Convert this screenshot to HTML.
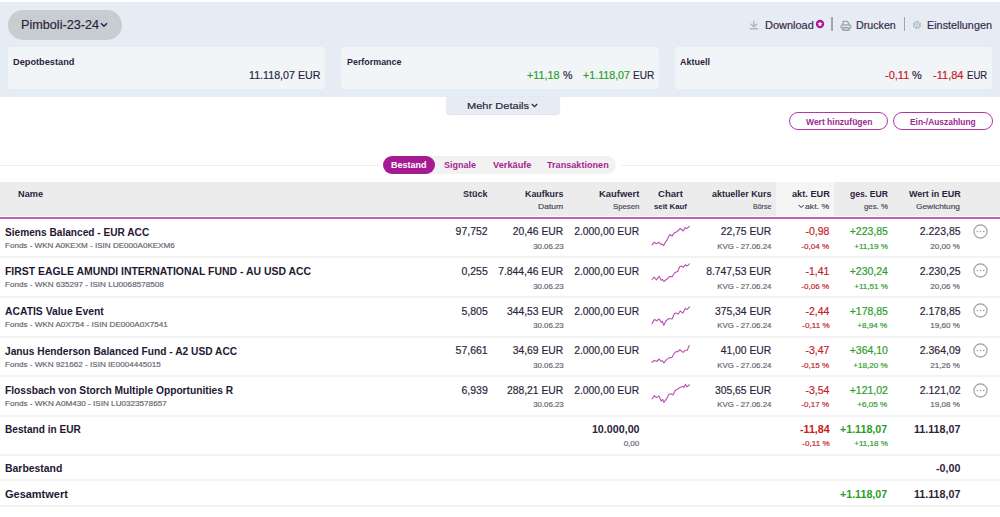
<!DOCTYPE html>
<html lang="de"><head><meta charset="utf-8"><title>Depot</title>
<style>
html,body{margin:0;padding:0;background:#fff;}
body{width:1000px;height:517px;overflow:hidden;position:relative;font-family:"Liberation Sans",sans-serif;color:#2d1f3d;}
.a{position:absolute;white-space:nowrap;line-height:1;}
</style></head><body>
<div class="a" style="left:0px;top:2px;width:1000px;height:95px;background:#e5ecf3;"></div>
<div class="a" style="left:8px;top:9.5px;width:114px;height:30.5px;background:#c8cdd2;border-radius:16px;"></div>
<div class="a" style="left:20.75px;top:19px;font-size:12px;transform:scaleX(1.0535);transform-origin:0 50%;-webkit-text-stroke:0.18px;color:#2d1f3d;">Pimboli-23-24</div>
<svg class="a" style="left:100px;top:22px" width="8" height="6" viewBox="0 0 8 6"><path d="M1 1.2 L4 4.2 L7 1.2" fill="none" stroke="#2d1f3d" stroke-width="1.4"/></svg>
<svg class="a" style="left:748px;top:19px" width="12" height="12" viewBox="0 0 12 12"><path d="M5.9 2.2V7.4M2.9 5.1L5.9 7.8L8.9 5.1" fill="none" stroke="#b1b4ba" stroke-width="1.35" stroke-linecap="round" stroke-linejoin="round"/><path d="M1.7 9.75H10" stroke="#b1b4ba" stroke-width="1.5"/></svg>
<div class="a" style="left:764.70px;top:21px;font-size:10.2px;transform:scaleX(1.0780);transform-origin:0 50%;-webkit-text-stroke:0.18px;color:#3a2b4b;">Download</div>
<svg class="a" style="left:815.3px;top:18.8px" width="10" height="10" viewBox="0 0 10 10"><circle cx="5" cy="5" r="4.15" fill="#b0148f"/><path d="M5 2.5L5.75 4.1L7.45 4.3L6.2 5.5L6.5 7.2L5 6.4L3.5 7.2L3.8 5.5L2.55 4.3L4.25 4.1Z" fill="#fff"/></svg>
<div class="a" style="left:831.3px;top:17px;width:1.5px;height:14px;background:#a2a6ab;"></div>
<svg class="a" style="left:839.5px;top:19.6px" width="12" height="11.4" viewBox="0 0 12 11.4"><path d="M3 5V1.3H6.9L8.9 3.3V5" fill="none" stroke="#9fa3a9" stroke-width="1.25" stroke-linejoin="round"/><rect x="1.1" y="5" width="9.8" height="3.7" rx="1.7" fill="#dfe3e8" stroke="#9fa3a9" stroke-width="1.25"/><rect x="2.9" y="7.5" width="6.2" height="2.9" rx="0.4" fill="#c9cdd2" stroke="#9fa3a9" stroke-width="1.2"/></svg>
<div class="a" style="left:856.20px;top:21px;font-size:10.2px;transform:scaleX(1.0479);transform-origin:0 50%;-webkit-text-stroke:0.18px;color:#3a2b4b;">Drucken</div>
<div class="a" style="left:903.8px;top:17px;width:1.5px;height:14px;background:#a2a6ab;"></div>
<svg class="a" style="left:911.7px;top:20.1px" width="10" height="10" viewBox="0 0 10 10"><circle cx="5" cy="5" r="3.5" fill="none" stroke="#b6b9be" stroke-width="1.5" stroke-dasharray="1.55 1.2"/><circle cx="5" cy="5" r="2.7" fill="none" stroke="#b6b9be" stroke-width="1"/><circle cx="5" cy="5" r="1.1" fill="none" stroke="#b6b9be" stroke-width="0.8"/></svg>
<div class="a" style="left:926.70px;top:21px;font-size:10.2px;transform:scaleX(1.0613);transform-origin:0 50%;-webkit-text-stroke:0.18px;color:#3a2b4b;">Einstellungen</div>
<div class="a" style="left:8px;top:47.3px;width:317px;height:42px;background:#f1f5f8;border-radius:3px;"></div>
<div class="a" style="left:341px;top:47.3px;width:318.25px;height:42px;background:#f1f5f8;border-radius:3px;"></div>
<div class="a" style="left:674.5px;top:47.3px;width:317.5px;height:42px;background:#f1f5f8;border-radius:3px;"></div>
<div class="a" style="left:13.00px;top:58px;font-size:8.7px;transform:scaleX(1.0602);transform-origin:0 50%;font-weight:bold;color:#2d1f3d;">Depotbestand</div>
<div class="a" style="left:346.75px;top:58px;font-size:8.7px;transform:scaleX(1.0246);transform-origin:0 50%;font-weight:bold;color:#2d1f3d;">Performance</div>
<div class="a" style="left:679.50px;top:58px;font-size:8.7px;transform:scaleX(1.0343);transform-origin:0 50%;font-weight:bold;color:#2d1f3d;">Aktuell</div>
<div class="a" style="left:249.25px;top:70px;font-size:11px;transform:scaleX(0.9717);transform-origin:0 50%;-webkit-text-stroke:0.18px;color:#2d1f3d;">11.118,07 EUR</div>
<div class="a" style="left:527.00px;top:70px;font-size:11px;transform:scaleX(0.9808);transform-origin:0 50%;-webkit-text-stroke:0.18px;color:#2a9d2a;">+11,18</div>
<div class="a" style="left:562.50px;top:70px;font-size:11px;transform:scaleX(0.9713);transform-origin:0 50%;-webkit-text-stroke:0.18px;color:#2d1f3d;">%</div>
<div class="a" style="left:582.50px;top:70px;font-size:11px;transform:scaleX(0.9705);transform-origin:0 50%;-webkit-text-stroke:0.18px;color:#2a9d2a;">+1.118,07</div>
<div class="a" style="left:633.00px;top:70px;font-size:11px;transform:scaleX(0.9149);transform-origin:0 50%;-webkit-text-stroke:0.18px;color:#2d1f3d;">EUR</div>
<div class="a" style="left:885.00px;top:70px;font-size:11px;transform:scaleX(0.9997);transform-origin:0 50%;-webkit-text-stroke:0.18px;color:#c4221f;">-0,11</div>
<div class="a" style="left:912.00px;top:70px;font-size:11px;transform:scaleX(0.9969);transform-origin:0 50%;-webkit-text-stroke:0.18px;color:#2d1f3d;">%</div>
<div class="a" style="left:932.50px;top:70px;font-size:11px;transform:scaleX(1.0041);transform-origin:0 50%;-webkit-text-stroke:0.18px;color:#c4221f;">-11,84</div>
<div class="a" style="left:966.50px;top:70px;font-size:11px;transform:scaleX(0.8719);transform-origin:0 50%;-webkit-text-stroke:0.18px;color:#2d1f3d;">EUR</div>
<div class="a" style="left:445.6px;top:97px;width:114px;height:17.2px;background:#e5ecf3;border-radius:0 0 4px 4px;box-shadow:0 0.5px 1px rgba(60,80,110,0.18);"></div>
<div class="a" style="left:466.50px;top:101px;font-size:9.9px;transform:scaleX(1.1202);transform-origin:0 50%;-webkit-text-stroke:0.18px;color:#2d1f3d;">Mehr Details</div>
<svg class="a" style="left:531px;top:103px" width="7" height="5" viewBox="0 0 7 5"><path d="M0.8 1L3.5 3.6L6.2 1" fill="none" stroke="#2d1f3d" stroke-width="1.2"/></svg>
<div class="a" style="left:788.75px;top:112px;width:97.3px;height:15.8px;border:1.2px solid #b136a9;border-radius:10px;"></div>
<div class="a" style="left:893.25px;top:112px;width:97.3px;height:15.8px;border:1.2px solid #b136a9;border-radius:10px;"></div>
<div class="a" style="left:805.50px;top:118px;font-size:8.3px;transform:scaleX(1.0253);transform-origin:0 50%;font-weight:bold;color:#9c2896;">Wert hinzufügen</div>
<div class="a" style="left:910.00px;top:118px;font-size:8.3px;transform:scaleX(1.0113);transform-origin:0 50%;font-weight:bold;color:#9c2896;">Ein-/Auszahlung</div>
<div class="a" style="left:0px;top:164.5px;width:1000px;height:1px;background:#efefef;"></div>
<div class="a" style="left:378.5px;top:160px;width:242.5px;height:10px;background:#fff;"></div>
<div class="a" style="left:383.5px;top:156.2px;width:232.7px;height:17.4px;background:#f2f2f2;border-radius:9px;"></div>
<div class="a" style="left:383.2px;top:155.8px;width:51.8px;height:18.2px;background:#a61a91;border-radius:9.1px;"></div>
<div class="a" style="left:391.00px;top:161px;font-size:8.5px;transform:scaleX(1.0585);transform-origin:0 50%;font-weight:bold;color:#fff;">Bestand</div>
<div class="a" style="left:444.00px;top:161px;font-size:8.5px;transform:scaleX(1.0585);transform-origin:0 50%;font-weight:bold;color:#a91f94;">Signale</div>
<div class="a" style="left:493.00px;top:161px;font-size:8.5px;transform:scaleX(1.0863);transform-origin:0 50%;font-weight:bold;color:#a91f94;">Verkäufe</div>
<div class="a" style="left:547.00px;top:161px;font-size:8.5px;transform:scaleX(1.0706);transform-origin:0 50%;font-weight:bold;color:#a91f94;">Transaktionen</div>
<div class="a" style="left:0px;top:182.4px;width:1000px;height:33.4px;background:#ececec;"></div>
<div class="a" style="left:776.2px;top:182.4px;width:57.9px;height:33.4px;background:#f5f5f5;"></div>
<div class="a" style="left:0px;top:217px;width:1000px;height:2px;background:#c25fb8;"></div>
<div class="a" style="left:18.00px;top:190px;font-size:8.8px;transform:scaleX(1.0430);transform-origin:0 50%;font-weight:bold;color:#2d1f3d;">Name</div>
<div class="a" style="left:463.20px;top:190px;font-size:8.8px;transform:scaleX(1.0182);transform-origin:0 50%;font-weight:bold;color:#2d1f3d;">Stück</div>
<div class="a" style="left:524.80px;top:190px;font-size:8.8px;transform:scaleX(1.0067);transform-origin:0 50%;font-weight:bold;color:#2d1f3d;">Kaufkurs</div>
<div class="a" style="left:538.00px;top:203px;font-size:8px;transform:scaleX(1.0695);transform-origin:0 50%;-webkit-text-stroke:0.18px;color:#4a4a55;">Datum</div>
<div class="a" style="left:599.00px;top:190px;font-size:8.8px;transform:scaleX(1.0730);transform-origin:0 50%;font-weight:bold;color:#2d1f3d;">Kaufwert</div>
<div class="a" style="left:613.00px;top:203px;font-size:8px;transform:scaleX(0.9730);transform-origin:0 50%;-webkit-text-stroke:0.18px;color:#4a4a55;">Spesen</div>
<div class="a" style="left:657.90px;top:190px;font-size:8.8px;transform:scaleX(1.0835);transform-origin:0 50%;font-weight:bold;color:#2d1f3d;">Chart</div>
<div class="a" style="left:654.20px;top:203px;font-size:7.6px;transform:scaleX(1.0219);transform-origin:0 50%;font-weight:bold;color:#2d1f3d;">seit Kauf</div>
<div class="a" style="left:711.70px;top:190px;font-size:8.8px;transform:scaleX(1.0138);transform-origin:0 50%;font-weight:bold;color:#2d1f3d;">aktueller Kurs</div>
<div class="a" style="left:752.90px;top:203px;font-size:8px;transform:scaleX(0.8756);transform-origin:0 50%;-webkit-text-stroke:0.18px;color:#4a4a55;">Börse</div>
<div class="a" style="left:791.70px;top:190px;font-size:8.8px;transform:scaleX(1.0445);transform-origin:0 50%;font-weight:bold;color:#2d1f3d;">akt. EUR</div>
<div class="a" style="left:805.30px;top:203px;font-size:8px;transform:scaleX(1.0886);transform-origin:0 50%;-webkit-text-stroke:0.18px;color:#4a4a55;">akt. %</div>
<svg class="a" style="left:797.6px;top:204.3px" width="6.4" height="5" viewBox="0 0 6.4 5"><path d="M0.8 1L3.2 3.6L5.6 1" fill="none" stroke="#2d1f3d" stroke-width="1"/></svg>
<div class="a" style="left:849.60px;top:190px;font-size:8.8px;transform:scaleX(0.9810);transform-origin:0 50%;font-weight:bold;color:#2d1f3d;">ges. EUR</div>
<div class="a" style="left:863.60px;top:203px;font-size:8px;transform:scaleX(0.9772);transform-origin:0 50%;-webkit-text-stroke:0.18px;color:#4a4a55;">ges. %</div>
<div class="a" style="left:908.50px;top:190px;font-size:8.8px;transform:scaleX(1.0220);transform-origin:0 50%;font-weight:bold;color:#2d1f3d;">Wert in EUR</div>
<div class="a" style="left:916.30px;top:203px;font-size:8px;transform:scaleX(1.0415);transform-origin:0 50%;-webkit-text-stroke:0.18px;color:#4a4a55;">Gewichtung</div>
<div class="a" style="left:0px;top:256px;width:1000px;height:2px;background:#f3f3f3;"></div>
<div class="a" style="left:5.10px;top:227px;font-size:10.7px;transform:scaleX(0.9474);transform-origin:0 50%;font-weight:bold;color:#241733;">Siemens Balanced - EUR ACC</div>
<div class="a" style="left:5.10px;top:242px;font-size:7.9px;transform:scaleX(1.0210);transform-origin:0 50%;-webkit-text-stroke:0.18px;color:#66666e;">Fonds - WKN A0KEXM - ISIN DE000A0KEXM6</div>
<div class="a" style="right:512.70px;top:226px;font-size:10.7px;transform:scaleX(0.9820);transform-origin:100% 50%;-webkit-text-stroke:0.18px;color:#2d1f3d;">97,752</div>
<div class="a" style="right:436.70px;top:226px;font-size:10.7px;transform:scaleX(0.9670);transform-origin:100% 50%;-webkit-text-stroke:0.18px;color:#2d1f3d;">20,46 EUR</div>
<div class="a" style="right:436.70px;top:243px;font-size:7.9px;transform:scaleX(0.9953);transform-origin:100% 50%;-webkit-text-stroke:0.18px;color:#66666e;">30.06.23</div>
<div class="a" style="right:360.60px;top:226px;font-size:10.7px;transform:scaleX(0.9670);transform-origin:100% 50%;-webkit-text-stroke:0.18px;color:#2d1f3d;">2.000,00 EUR</div>
<svg class="a" style="left:645px;top:220px" width="50" height="35" viewBox="0 0 50 35"><path d="M7.1 24.9 L9.1 22.3 L11.5 23.8 L13.9 22.3 L16.2 24.5 L17.3 24.0 L18.6 25.7 L20.3 22.3 L22.3 19.6 L23.7 16.2 L24.9 14.5 L27.1 16.1 L28.8 13.2 L31.8 11.8 L35.2 8.5 L38.2 11.0 L40.3 7.6 L41.9 8.7 L44.3 6.4" fill="none" stroke="#bb52b2" stroke-width="1.12" stroke-linejoin="round" stroke-linecap="round"/></svg>
<div class="a" style="right:228.80px;top:226px;font-size:10.7px;transform:scaleX(0.9670);transform-origin:100% 50%;-webkit-text-stroke:0.18px;color:#2d1f3d;">22,75 EUR</div>
<div class="a" style="right:228.80px;top:243px;font-size:7.9px;transform:scaleX(0.9953);transform-origin:100% 50%;-webkit-text-stroke:0.18px;color:#66666e;">KVG - 27.06.24</div>
<div class="a" style="right:170.50px;top:226px;font-size:10.7px;transform:scaleX(0.9820);transform-origin:100% 50%;-webkit-text-stroke:0.18px;color:#c4221f;">-0,98</div>
<div class="a" style="right:170.50px;top:243px;font-size:7.9px;transform:scaleX(1.0238);transform-origin:100% 50%;-webkit-text-stroke:0.18px;color:#c4221f;">-0,04 %</div>
<div class="a" style="right:112.50px;top:226px;font-size:10.7px;transform:scaleX(0.9820);transform-origin:100% 50%;-webkit-text-stroke:0.18px;color:#2a9d2a;">+223,85</div>
<div class="a" style="right:112.50px;top:243px;font-size:7.9px;transform:scaleX(1.0238);transform-origin:100% 50%;-webkit-text-stroke:0.18px;color:#2a9d2a;">+11,19 %</div>
<div class="a" style="right:39.70px;top:226px;font-size:10.7px;transform:scaleX(0.9820);transform-origin:100% 50%;-webkit-text-stroke:0.18px;color:#2d1f3d;">2.223,85</div>
<div class="a" style="right:39.70px;top:243px;font-size:7.9px;transform:scaleX(1.0238);transform-origin:100% 50%;-webkit-text-stroke:0.18px;color:#66666e;">20,00 %</div>
<svg class="a" style="left:972.5px;top:223.6px" width="15" height="15" viewBox="0 0 15 15"><circle cx="7.5" cy="7.5" r="6.6" fill="#fff" stroke="#9a9ca2" stroke-width="1.15"/><rect x="3.6" y="6.85" width="1.4" height="1.3" fill="#9a9ea0"/><rect x="6.8" y="6.85" width="1.4" height="1.3" fill="#9a9ea0"/><rect x="10" y="6.85" width="1.4" height="1.3" fill="#9a9ea0"/></svg>
<div class="a" style="left:0px;top:296px;width:1000px;height:2px;background:#f3f3f3;"></div>
<div class="a" style="left:5.10px;top:266px;font-size:10.7px;transform:scaleX(0.9756);transform-origin:0 50%;font-weight:bold;color:#241733;">FIRST EAGLE AMUNDI INTERNATIONAL FUND - AU USD ACC</div>
<div class="a" style="left:5.10px;top:281px;font-size:7.9px;transform:scaleX(1.0279);transform-origin:0 50%;-webkit-text-stroke:0.18px;color:#66666e;">Fonds - WKN 635297 - ISIN LU0068578508</div>
<div class="a" style="right:512.70px;top:266px;font-size:10.7px;transform:scaleX(0.9820);transform-origin:100% 50%;-webkit-text-stroke:0.18px;color:#2d1f3d;">0,255</div>
<div class="a" style="right:436.70px;top:266px;font-size:10.7px;transform:scaleX(0.9670);transform-origin:100% 50%;-webkit-text-stroke:0.18px;color:#2d1f3d;">7.844,46 EUR</div>
<div class="a" style="right:436.70px;top:283px;font-size:7.9px;transform:scaleX(0.9953);transform-origin:100% 50%;-webkit-text-stroke:0.18px;color:#66666e;">30.06.23</div>
<div class="a" style="right:360.60px;top:266px;font-size:10.7px;transform:scaleX(0.9670);transform-origin:100% 50%;-webkit-text-stroke:0.18px;color:#2d1f3d;">2.000,00 EUR</div>
<svg class="a" style="left:645px;top:260px" width="50" height="35" viewBox="0 0 50 35"><path d="M7.1 19.5 L9.1 17.1 L11.6 19.8 L14.1 16.2 L16.2 20.3 L17.3 19.3 L18.8 21.5 L21.7 19.3 L24.4 16.6 L27.4 16.6 L29.4 12.9 L32.8 11.2 L34.6 6.8 L36.5 6.0 L38.2 7.4 L40.5 4.6 L41.9 6.1 L44.5 3.9" fill="none" stroke="#bb52b2" stroke-width="1.12" stroke-linejoin="round" stroke-linecap="round"/></svg>
<div class="a" style="right:228.80px;top:266px;font-size:10.7px;transform:scaleX(0.9670);transform-origin:100% 50%;-webkit-text-stroke:0.18px;color:#2d1f3d;">8.747,53 EUR</div>
<div class="a" style="right:228.80px;top:283px;font-size:7.9px;transform:scaleX(0.9953);transform-origin:100% 50%;-webkit-text-stroke:0.18px;color:#66666e;">KVG - 27.06.24</div>
<div class="a" style="right:170.50px;top:266px;font-size:10.7px;transform:scaleX(0.9820);transform-origin:100% 50%;-webkit-text-stroke:0.18px;color:#c4221f;">-1,41</div>
<div class="a" style="right:170.50px;top:283px;font-size:7.9px;transform:scaleX(1.0238);transform-origin:100% 50%;-webkit-text-stroke:0.18px;color:#c4221f;">-0,06 %</div>
<div class="a" style="right:112.50px;top:266px;font-size:10.7px;transform:scaleX(0.9820);transform-origin:100% 50%;-webkit-text-stroke:0.18px;color:#2a9d2a;">+230,24</div>
<div class="a" style="right:112.50px;top:283px;font-size:7.9px;transform:scaleX(1.0238);transform-origin:100% 50%;-webkit-text-stroke:0.18px;color:#2a9d2a;">+11,51 %</div>
<div class="a" style="right:39.70px;top:266px;font-size:10.7px;transform:scaleX(0.9820);transform-origin:100% 50%;-webkit-text-stroke:0.18px;color:#2d1f3d;">2.230,25</div>
<div class="a" style="right:39.70px;top:283px;font-size:7.9px;transform:scaleX(1.0238);transform-origin:100% 50%;-webkit-text-stroke:0.18px;color:#66666e;">20,06 %</div>
<svg class="a" style="left:972.5px;top:263.4px" width="15" height="15" viewBox="0 0 15 15"><circle cx="7.5" cy="7.5" r="6.6" fill="#fff" stroke="#9a9ca2" stroke-width="1.15"/><rect x="3.6" y="6.85" width="1.4" height="1.3" fill="#9a9ea0"/><rect x="6.8" y="6.85" width="1.4" height="1.3" fill="#9a9ea0"/><rect x="10" y="6.85" width="1.4" height="1.3" fill="#9a9ea0"/></svg>
<div class="a" style="left:0px;top:336px;width:1000px;height:2px;background:#f3f3f3;"></div>
<div class="a" style="left:5.10px;top:306px;font-size:10.7px;transform:scaleX(0.9689);transform-origin:0 50%;font-weight:bold;color:#241733;">ACATIS Value Event</div>
<div class="a" style="left:5.10px;top:321px;font-size:7.9px;transform:scaleX(1.0276);transform-origin:0 50%;-webkit-text-stroke:0.18px;color:#66666e;">Fonds - WKN A0X754 - ISIN DE000A0X7541</div>
<div class="a" style="right:512.70px;top:306px;font-size:10.7px;transform:scaleX(0.9820);transform-origin:100% 50%;-webkit-text-stroke:0.18px;color:#2d1f3d;">5,805</div>
<div class="a" style="right:436.70px;top:306px;font-size:10.7px;transform:scaleX(0.9670);transform-origin:100% 50%;-webkit-text-stroke:0.18px;color:#2d1f3d;">344,53 EUR</div>
<div class="a" style="right:436.70px;top:322px;font-size:7.9px;transform:scaleX(0.9953);transform-origin:100% 50%;-webkit-text-stroke:0.18px;color:#66666e;">30.06.23</div>
<div class="a" style="right:360.60px;top:306px;font-size:10.7px;transform:scaleX(0.9670);transform-origin:100% 50%;-webkit-text-stroke:0.18px;color:#2d1f3d;">2.000,00 EUR</div>
<svg class="a" style="left:645px;top:299px" width="50" height="35" viewBox="0 0 50 35"><path d="M7.1 24.4 L9.5 20.4 L11.8 21.8 L14.1 20.0 L16.2 23.3 L17.3 22.2 L18.8 26.3 L21.0 21.7 L24.0 19.5 L27.1 20.0 L29.4 14.5 L30.8 13.9 L33.2 15.0 L35.2 12.0 L37.9 14.1 L40.3 9.5 L42.3 10.5 L44.5 7.8" fill="none" stroke="#bb52b2" stroke-width="1.12" stroke-linejoin="round" stroke-linecap="round"/></svg>
<div class="a" style="right:228.80px;top:306px;font-size:10.7px;transform:scaleX(0.9670);transform-origin:100% 50%;-webkit-text-stroke:0.18px;color:#2d1f3d;">375,34 EUR</div>
<div class="a" style="right:228.80px;top:322px;font-size:7.9px;transform:scaleX(0.9953);transform-origin:100% 50%;-webkit-text-stroke:0.18px;color:#66666e;">KVG - 27.06.24</div>
<div class="a" style="right:170.50px;top:306px;font-size:10.7px;transform:scaleX(0.9820);transform-origin:100% 50%;-webkit-text-stroke:0.18px;color:#c4221f;">-2,44</div>
<div class="a" style="right:170.50px;top:322px;font-size:7.9px;transform:scaleX(1.0238);transform-origin:100% 50%;-webkit-text-stroke:0.18px;color:#c4221f;">-0,11 %</div>
<div class="a" style="right:112.50px;top:306px;font-size:10.7px;transform:scaleX(0.9820);transform-origin:100% 50%;-webkit-text-stroke:0.18px;color:#2a9d2a;">+178,85</div>
<div class="a" style="right:112.50px;top:322px;font-size:7.9px;transform:scaleX(1.0238);transform-origin:100% 50%;-webkit-text-stroke:0.18px;color:#2a9d2a;">+8,94 %</div>
<div class="a" style="right:39.70px;top:306px;font-size:10.7px;transform:scaleX(0.9820);transform-origin:100% 50%;-webkit-text-stroke:0.18px;color:#2d1f3d;">2.178,85</div>
<div class="a" style="right:39.70px;top:322px;font-size:7.9px;transform:scaleX(1.0238);transform-origin:100% 50%;-webkit-text-stroke:0.18px;color:#66666e;">19,60 %</div>
<svg class="a" style="left:972.5px;top:302.6px" width="15" height="15" viewBox="0 0 15 15"><circle cx="7.5" cy="7.5" r="6.6" fill="#fff" stroke="#9a9ca2" stroke-width="1.15"/><rect x="3.6" y="6.85" width="1.4" height="1.3" fill="#9a9ea0"/><rect x="6.8" y="6.85" width="1.4" height="1.3" fill="#9a9ea0"/><rect x="10" y="6.85" width="1.4" height="1.3" fill="#9a9ea0"/></svg>
<div class="a" style="left:0px;top:375px;width:1000px;height:2px;background:#f3f3f3;"></div>
<div class="a" style="left:5.10px;top:346px;font-size:10.7px;transform:scaleX(0.9542);transform-origin:0 50%;font-weight:bold;color:#241733;">Janus Henderson Balanced Fund - A2 USD ACC</div>
<div class="a" style="left:5.10px;top:361px;font-size:7.9px;transform:scaleX(1.0260);transform-origin:0 50%;-webkit-text-stroke:0.18px;color:#66666e;">Fonds - WKN 921662 - ISIN IE0004445015</div>
<div class="a" style="right:512.70px;top:345px;font-size:10.7px;transform:scaleX(0.9820);transform-origin:100% 50%;-webkit-text-stroke:0.18px;color:#2d1f3d;">57,661</div>
<div class="a" style="right:436.70px;top:345px;font-size:10.7px;transform:scaleX(0.9670);transform-origin:100% 50%;-webkit-text-stroke:0.18px;color:#2d1f3d;">34,69 EUR</div>
<div class="a" style="right:436.70px;top:362px;font-size:7.9px;transform:scaleX(0.9953);transform-origin:100% 50%;-webkit-text-stroke:0.18px;color:#66666e;">30.06.23</div>
<div class="a" style="right:360.60px;top:345px;font-size:10.7px;transform:scaleX(0.9670);transform-origin:100% 50%;-webkit-text-stroke:0.18px;color:#2d1f3d;">2.000,00 EUR</div>
<svg class="a" style="left:645px;top:339px" width="50" height="35" viewBox="0 0 50 35"><path d="M7.1 23.3 L9.3 21.5 L11.8 22.5 L14.2 20.0 L15.9 22.2 L17.5 21.7 L18.9 24.0 L21.0 21.1 L24.4 18.6 L26.7 18.8 L29.8 13.5 L31.5 12.5 L33.2 12.7 L34.8 10.7 L38.2 13.4 L40.3 11.2 L42.3 11.2 L44.3 6.4" fill="none" stroke="#bb52b2" stroke-width="1.12" stroke-linejoin="round" stroke-linecap="round"/></svg>
<div class="a" style="right:228.80px;top:345px;font-size:10.7px;transform:scaleX(0.9670);transform-origin:100% 50%;-webkit-text-stroke:0.18px;color:#2d1f3d;">41,00 EUR</div>
<div class="a" style="right:228.80px;top:362px;font-size:7.9px;transform:scaleX(0.9953);transform-origin:100% 50%;-webkit-text-stroke:0.18px;color:#66666e;">KVG - 27.06.24</div>
<div class="a" style="right:170.50px;top:345px;font-size:10.7px;transform:scaleX(0.9820);transform-origin:100% 50%;-webkit-text-stroke:0.18px;color:#c4221f;">-3,47</div>
<div class="a" style="right:170.50px;top:362px;font-size:7.9px;transform:scaleX(1.0238);transform-origin:100% 50%;-webkit-text-stroke:0.18px;color:#c4221f;">-0,15 %</div>
<div class="a" style="right:112.50px;top:345px;font-size:10.7px;transform:scaleX(0.9820);transform-origin:100% 50%;-webkit-text-stroke:0.18px;color:#2a9d2a;">+364,10</div>
<div class="a" style="right:112.50px;top:362px;font-size:7.9px;transform:scaleX(1.0238);transform-origin:100% 50%;-webkit-text-stroke:0.18px;color:#2a9d2a;">+18,20 %</div>
<div class="a" style="right:39.70px;top:345px;font-size:10.7px;transform:scaleX(0.9820);transform-origin:100% 50%;-webkit-text-stroke:0.18px;color:#2d1f3d;">2.364,09</div>
<div class="a" style="right:39.70px;top:362px;font-size:7.9px;transform:scaleX(1.0238);transform-origin:100% 50%;-webkit-text-stroke:0.18px;color:#66666e;">21,26 %</div>
<svg class="a" style="left:972.5px;top:342.6px" width="15" height="15" viewBox="0 0 15 15"><circle cx="7.5" cy="7.5" r="6.6" fill="#fff" stroke="#9a9ca2" stroke-width="1.15"/><rect x="3.6" y="6.85" width="1.4" height="1.3" fill="#9a9ea0"/><rect x="6.8" y="6.85" width="1.4" height="1.3" fill="#9a9ea0"/><rect x="10" y="6.85" width="1.4" height="1.3" fill="#9a9ea0"/></svg>
<div class="a" style="left:0px;top:415px;width:1000px;height:2px;background:#f3f3f3;"></div>
<div class="a" style="left:5.10px;top:385px;font-size:10.7px;transform:scaleX(0.9557);transform-origin:0 50%;font-weight:bold;color:#241733;">Flossbach von Storch Multiple Opportunities R</div>
<div class="a" style="left:5.10px;top:400px;font-size:7.9px;transform:scaleX(1.0298);transform-origin:0 50%;-webkit-text-stroke:0.18px;color:#66666e;">Fonds - WKN A0M430 - ISIN LU0323578657</div>
<div class="a" style="right:512.70px;top:385px;font-size:10.7px;transform:scaleX(0.9820);transform-origin:100% 50%;-webkit-text-stroke:0.18px;color:#2d1f3d;">6,939</div>
<div class="a" style="right:436.70px;top:385px;font-size:10.7px;transform:scaleX(0.9670);transform-origin:100% 50%;-webkit-text-stroke:0.18px;color:#2d1f3d;">288,21 EUR</div>
<div class="a" style="right:436.70px;top:401px;font-size:7.9px;transform:scaleX(0.9953);transform-origin:100% 50%;-webkit-text-stroke:0.18px;color:#66666e;">30.06.23</div>
<div class="a" style="right:360.60px;top:385px;font-size:10.7px;transform:scaleX(0.9670);transform-origin:100% 50%;-webkit-text-stroke:0.18px;color:#2d1f3d;">2.000,00 EUR</div>
<svg class="a" style="left:645px;top:378px" width="50" height="35" viewBox="0 0 50 35"><path d="M7.1 20.8 L9.3 17.7 L11.6 19.6 L13.9 17.9 L16.2 23.0 L17.7 21.5 L18.9 24.4 L21.7 20.6 L23.7 16.6 L25.7 15.7 L28.1 16.9 L30.1 12.5 L32.5 11.2 L34.5 9.8 L37.2 8.5 L38.9 9.1 L40.6 6.4 L41.9 8.9 L44.5 6.8" fill="none" stroke="#bb52b2" stroke-width="1.12" stroke-linejoin="round" stroke-linecap="round"/></svg>
<div class="a" style="right:228.80px;top:385px;font-size:10.7px;transform:scaleX(0.9670);transform-origin:100% 50%;-webkit-text-stroke:0.18px;color:#2d1f3d;">305,65 EUR</div>
<div class="a" style="right:228.80px;top:401px;font-size:7.9px;transform:scaleX(0.9953);transform-origin:100% 50%;-webkit-text-stroke:0.18px;color:#66666e;">KVG - 27.06.24</div>
<div class="a" style="right:170.50px;top:385px;font-size:10.7px;transform:scaleX(0.9820);transform-origin:100% 50%;-webkit-text-stroke:0.18px;color:#c4221f;">-3,54</div>
<div class="a" style="right:170.50px;top:401px;font-size:7.9px;transform:scaleX(1.0238);transform-origin:100% 50%;-webkit-text-stroke:0.18px;color:#c4221f;">-0,17 %</div>
<div class="a" style="right:112.50px;top:385px;font-size:10.7px;transform:scaleX(0.9820);transform-origin:100% 50%;-webkit-text-stroke:0.18px;color:#2a9d2a;">+121,02</div>
<div class="a" style="right:112.50px;top:401px;font-size:7.9px;transform:scaleX(1.0238);transform-origin:100% 50%;-webkit-text-stroke:0.18px;color:#2a9d2a;">+6,05 %</div>
<div class="a" style="right:39.70px;top:385px;font-size:10.7px;transform:scaleX(0.9820);transform-origin:100% 50%;-webkit-text-stroke:0.18px;color:#2d1f3d;">2.121,02</div>
<div class="a" style="right:39.70px;top:401px;font-size:7.9px;transform:scaleX(1.0238);transform-origin:100% 50%;-webkit-text-stroke:0.18px;color:#66666e;">19,08 %</div>
<svg class="a" style="left:972.5px;top:382.6px" width="15" height="15" viewBox="0 0 15 15"><circle cx="7.5" cy="7.5" r="6.6" fill="#fff" stroke="#9a9ca2" stroke-width="1.15"/><rect x="3.6" y="6.85" width="1.4" height="1.3" fill="#9a9ea0"/><rect x="6.8" y="6.85" width="1.4" height="1.3" fill="#9a9ea0"/><rect x="10" y="6.85" width="1.4" height="1.3" fill="#9a9ea0"/></svg>
<div class="a" style="left:5.10px;top:424px;font-size:10.7px;transform:scaleX(0.9456);transform-origin:0 50%;font-weight:bold;color:#241733;">Bestand in EUR</div>
<div class="a" style="right:360.50px;top:424px;font-size:10.7px;transform:scaleX(1.0017);transform-origin:100% 50%;font-weight:bold;color:#2d1f3d;">10.000,00</div>
<div class="a" style="right:360.50px;top:440px;font-size:7.9px;transform:scaleX(1.0238);transform-origin:100% 50%;-webkit-text-stroke:0.18px;color:#66666e;">0,00</div>
<div class="a" style="right:170.50px;top:424px;font-size:10.7px;transform:scaleX(1.0017);transform-origin:100% 50%;font-weight:bold;color:#c4221f;">-11,84</div>
<div class="a" style="right:170.50px;top:440px;font-size:7.9px;transform:scaleX(1.0238);transform-origin:100% 50%;-webkit-text-stroke:0.18px;color:#c4221f;">-0,11 %</div>
<div class="a" style="right:112.50px;top:424px;font-size:10.7px;transform:scaleX(1.0017);transform-origin:100% 50%;font-weight:bold;color:#2a9d2a;">+1.118,07</div>
<div class="a" style="right:112.50px;top:440px;font-size:7.9px;transform:scaleX(1.0238);transform-origin:100% 50%;-webkit-text-stroke:0.18px;color:#2a9d2a;">+11,18 %</div>
<div class="a" style="right:39.50px;top:424px;font-size:10.7px;transform:scaleX(1.0017);transform-origin:100% 50%;font-weight:bold;color:#2d1f3d;">11.118,07</div>
<div class="a" style="left:0px;top:454px;width:1000px;height:2px;background:#f3f3f3;"></div>
<div class="a" style="left:5.10px;top:463px;font-size:10.7px;transform:scaleX(0.9751);transform-origin:0 50%;font-weight:bold;color:#241733;">Barbestand</div>
<div class="a" style="right:39.50px;top:463px;font-size:10.7px;transform:scaleX(1.0017);transform-origin:100% 50%;font-weight:bold;color:#2d1f3d;">-0,00</div>
<div class="a" style="left:0px;top:479.3px;width:1000px;height:2px;background:#f3f3f3;"></div>
<div class="a" style="left:5.10px;top:489px;font-size:10.7px;transform:scaleX(1.0269);transform-origin:0 50%;font-weight:bold;color:#241733;">Gesamtwert</div>
<div class="a" style="right:112.50px;top:489px;font-size:10.7px;transform:scaleX(1.0017);transform-origin:100% 50%;font-weight:bold;color:#2a9d2a;">+1.118,07</div>
<div class="a" style="right:39.50px;top:489px;font-size:10.7px;transform:scaleX(1.0017);transform-origin:100% 50%;font-weight:bold;color:#2d1f3d;">11.118,07</div>
<div class="a" style="left:0px;top:504.7px;width:1000px;height:2px;background:#f3f3f3;"></div>
</body></html>
